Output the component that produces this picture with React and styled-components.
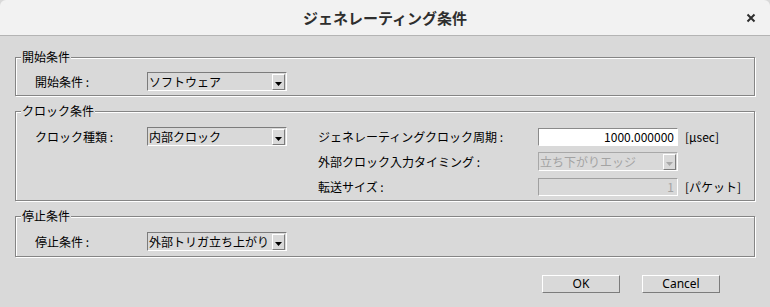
import React from 'react';
import styled, { createGlobalStyle } from 'styled-components';

const Global = createGlobalStyle`
  html, body { margin: 0; padding: 0; background: #d9d9d9; }
  body {
    font-family: "Noto Sans CJK JP", "Noto Sans", sans-serif;
    font-size: 12px;
    color: #000;
  }
`;

const Window = styled.div`
  width: 770px;
  height: 307px;
  display: flex;
  flex-direction: column;
  background: #d9d9d9;
  overflow: hidden;
`;

const TitleBar = styled.div`
  flex: none;
  height: 35px;
  background: #f2f2f2;
  border-bottom: 1px solid #b4b4b4;
  border-radius: 6px 6px 0 0;
  display: grid;
  grid-template-columns: 1fr auto 1fr;
  align-items: center;
`;

const Title = styled.div`
  grid-column: 2;
  font-size: 15px;
  font-weight: bold;
  color: #2e2e2e;
`;

const CloseBox = styled.div`
  grid-column: 3;
  justify-self: end;
  margin-right: 14px;
  width: 10px;
  height: 10px;
  display: flex;
`;

const Body = styled.div`
  flex: 1;
  padding: 21px 15px 0 15px;
  display: flex;
  flex-direction: column;
  gap: 15px;
`;

const Group = styled.div`
  position: relative;
  border: 1px solid #858585;
  box-shadow: inset 1px 1px 0 #fff, 1px 1px 0 #fff;
  padding: ${p => p.$pt || 14}px 0 ${p => p.$pb || 4}px 19px;
`;

const GroupTitle = styled.span`
  position: absolute;
  top: -9px;
  left: 5px;
  padding: 0 1px;
  line-height: 16px;
  background: #d9d9d9;
`;

const Grid = styled.div`
  display: grid;
  grid-template-columns: 112px 171px 220px 147px auto;
  grid-auto-rows: 19px;
  row-gap: 6px;
  align-items: center;
`;

const Label = styled.span`
  grid-column: ${p => p.$col || 1};
  white-space: nowrap;
  line-height: 19px;
`;

const Unit = styled.span`
  grid-column: 5;
  white-space: nowrap;
`;

const ComboBox = styled.div`
  grid-column: ${p => p.$col || 2};
  width: 140px;
  height: 19px;
  box-sizing: border-box;
  display: flex;
  border: 1px solid;
  border-color: ${p => (p.$disabled ? '#a8a8a8' : '#7c7c7c')} #fff #fff ${p => (p.$disabled ? '#a8a8a8' : '#7c7c7c')};
  background: #d9d9d9;
  color: ${p => (p.$disabled ? '#a3a3a3' : '#000')};
`;

const ComboText = styled.span`
  flex: 1;
  padding-left: 1px;
  line-height: 17px;
  white-space: nowrap;
  overflow: hidden;
`;

const ArrowButton = styled.span`
  flex: none;
  width: 13px;
  margin: 1px 1px 0 0;
  box-sizing: border-box;
  border: 1px solid;
  border-color: #fff #7c7c7c #7c7c7c #fff;
  display: flex;
  align-items: flex-end;
  justify-content: center;
  padding-bottom: 3px;
`;

const Field = styled.div`
  grid-column: 4;
  width: 140px;
  height: 18px;
  box-sizing: border-box;
  border: 1px solid;
  border-color: ${p => (p.$disabled ? '#a0a0a0' : '#8a8a8a')} #fff #fff ${p => (p.$disabled ? '#a0a0a0' : '#8a8a8a')};
  background: ${p => (p.$disabled ? '#d9d9d9' : '#fff')};
  color: ${p => (p.$disabled ? '#a3a3a3' : '#000')};
  text-align: right;
  padding-right: 3px;
  line-height: 16px;
`;

const Footer = styled.div`
  display: flex;
  justify-content: flex-end;
  gap: 22px;
  padding-right: 35px;
  margin-top: 3px;
`;

const Button = styled.button`
  width: 78px;
  height: 18px;
  box-sizing: border-box;
  border: 1px solid;
  border-color: #fff #7c7c7c #7c7c7c #fff;
  background: #d9d9d9;
  font-family: "Noto Sans", "Noto Sans CJK JP", sans-serif;
  font-size: 12px;
  line-height: 14px;
  padding: 0;
  color: #000;
`;

function Arrow({ disabled }) {
  return (
    <svg width="7" height="4" viewBox="0 0 7 4">
      <polygon points="0,0 7,0 3.5,4" fill={disabled ? '#a8a8a8' : '#000'} />
    </svg>
  );
}

function Combo({ children, disabled, col }) {
  return (
    <ComboBox $disabled={disabled} $col={col}>
      <ComboText>{children}</ComboText>
      <ArrowButton>
        <Arrow disabled={disabled} />
      </ArrowButton>
    </ComboBox>
  );
}

export default function App() {
  return (
    <Window>
      <Global />
      <TitleBar>
        <Title>ジェネレーティング条件</Title>
        <CloseBox>
          <svg width="10" height="10" viewBox="0 0 10 10">
            <path d="M1.5 1.5 L8.5 8.5 M8.5 1.5 L1.5 8.5" stroke="#2e2e2e" strokeWidth="2" />
          </svg>
        </CloseBox>
      </TitleBar>
      <Body>
        <Group>
          <GroupTitle>開始条件</GroupTitle>
          <Grid>
            <Label>開始条件 :</Label>
            <Combo>ソフトウェア</Combo>
          </Grid>
        </Group>
        <Group $pt={15}>
          <GroupTitle>クロック条件</GroupTitle>
          <Grid>
            <Label>クロック種類 :</Label>
            <Combo>内部クロック</Combo>
            <Label $col={3}>ジェネレーティングクロック周期 :</Label>
            <Field>1000.000000</Field>
            <Unit>[µsec]</Unit>
            <Label $col={3}>外部クロック入力タイミング :</Label>
            <Combo col={4} disabled>立ち下がりエッジ</Combo>
            <Label $col={3}>転送サイズ :</Label>
            <Field $disabled>1</Field>
            <Unit>[パケット]</Unit>
          </Grid>
        </Group>
        <Group $pt={15} $pb={5}>
          <GroupTitle>停止条件</GroupTitle>
          <Grid>
            <Label>停止条件 :</Label>
            <Combo>外部トリガ立ち上がり</Combo>
          </Grid>
        </Group>
        <Footer>
          <Button>OK</Button>
          <Button>Cancel</Button>
        </Footer>
      </Body>
    </Window>
  );
}
